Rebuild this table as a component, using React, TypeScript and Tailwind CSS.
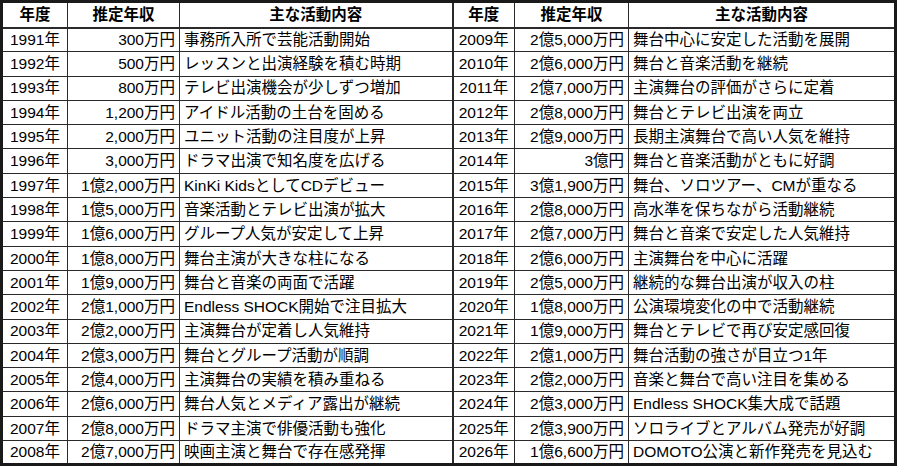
const LEFT: [string, string, string][] = [
  ["1991年", "300万円", "事務所入所で芸能活動開始"],
  ["1992年", "500万円", "レッスンと出演経験を積む時期"],
  ["1993年", "800万円", "テレビ出演機会が少しずつ増加"],
  ["1994年", "1,200万円", "アイドル活動の土台を固める"],
  ["1995年", "2,000万円", "ユニット活動の注目度が上昇"],
  ["1996年", "3,000万円", "ドラマ出演で知名度を広げる"],
  ["1997年", "1億2,000万円", "KinKi KidsとしてCDデビュー"],
  ["1998年", "1億5,000万円", "音楽活動とテレビ出演が拡大"],
  ["1999年", "1億6,000万円", "グループ人気が安定して上昇"],
  ["2000年", "1億8,000万円", "舞台主演が大きな柱になる"],
  ["2001年", "1億9,000万円", "舞台と音楽の両面で活躍"],
  ["2002年", "2億1,000万円", "Endless SHOCK開始で注目拡大"],
  ["2003年", "2億2,000万円", "主演舞台が定着し人気維持"],
  ["2004年", "2億3,000万円", "舞台とグループ活動が順調"],
  ["2005年", "2億4,000万円", "主演舞台の実績を積み重ねる"],
  ["2006年", "2億6,000万円", "舞台人気とメディア露出が継続"],
  ["2007年", "2億8,000万円", "ドラマ主演で俳優活動も強化"],
  ["2008年", "2億7,000万円", "映画主演と舞台で存在感発揮"],
];

const RIGHT: [string, string, string][] = [
  ["2009年", "2億5,000万円", "舞台中心に安定した活動を展開"],
  ["2010年", "2億6,000万円", "舞台と音楽活動を継続"],
  ["2011年", "2億7,000万円", "主演舞台の評価がさらに定着"],
  ["2012年", "2億8,000万円", "舞台とテレビ出演を両立"],
  ["2013年", "2億9,000万円", "長期主演舞台で高い人気を維持"],
  ["2014年", "3億円", "舞台と音楽活動がともに好調"],
  ["2015年", "3億1,900万円", "舞台、ソロツアー、CMが重なる"],
  ["2016年", "2億8,000万円", "高水準を保ちながら活動継続"],
  ["2017年", "2億7,000万円", "舞台と音楽で安定した人気維持"],
  ["2018年", "2億6,000万円", "主演舞台を中心に活躍"],
  ["2019年", "2億5,000万円", "継続的な舞台出演が収入の柱"],
  ["2020年", "1億8,000万円", "公演環境変化の中で活動継続"],
  ["2021年", "1億9,000万円", "舞台とテレビで再び安定感回復"],
  ["2022年", "2億1,000万円", "舞台活動の強さが目立つ1年"],
  ["2023年", "2億2,000万円", "音楽と舞台で高い注目を集める"],
  ["2024年", "2億3,000万円", "Endless SHOCK集大成で話題"],
  ["2025年", "2億3,900万円", "ソロライブとアルバム発売が好調"],
  ["2026年", "1億6,600万円", "DOMOTO公演と新作発売を見込む"],
];

const cell = "border border-[#2a2a2a] px-[4px] h-[24.3px] leading-none whitespace-nowrap";
const head = "border border-[#2a2a2a] border-b-2 h-[26px] font-bold text-center leading-none";

export default function App() {
  return (
    <div className="w-[900px] h-[470px] bg-white text-black font-['Liberation_Sans','Noto_Sans_CJK_JP',sans-serif] text-[15.5px]">
      <table className="table-fixed border-collapse border-[3px] border-[#1a1a1a] w-[897px]">
        <colgroup>
          <col className="w-[66px]" />
          <col className="w-[112px]" />
          <col className="w-[273px]" />
          <col className="w-[62px]" />
          <col className="w-[114px]" />
          <col />
        </colgroup>
        <thead>
          <tr>
            <th className={head}>年度</th>
            <th className={head}>推定年収</th>
            <th className={`${head} border-r-2`}>主な活動内容</th>
            <th className={head}>年度</th>
            <th className={head}>推定年収</th>
            <th className={head}>主な活動内容</th>
          </tr>
        </thead>
        <tbody>
          {LEFT.map((l, i) => {
            const r = RIGHT[i];
            return (
              <tr key={l[0]}>
                <td className={`${cell} text-center`}>{l[0]}</td>
                <td className={`${cell} text-right`}>{l[1]}</td>
                <td className={`${cell} border-r-2`}>{l[2]}</td>
                <td className={`${cell} text-center`}>{r[0]}</td>
                <td className={`${cell} text-right`}>{r[1]}</td>
                <td className={cell}>{r[2]}</td>
              </tr>
            );
          })}
        </tbody>
      </table>
    </div>
  );
}
